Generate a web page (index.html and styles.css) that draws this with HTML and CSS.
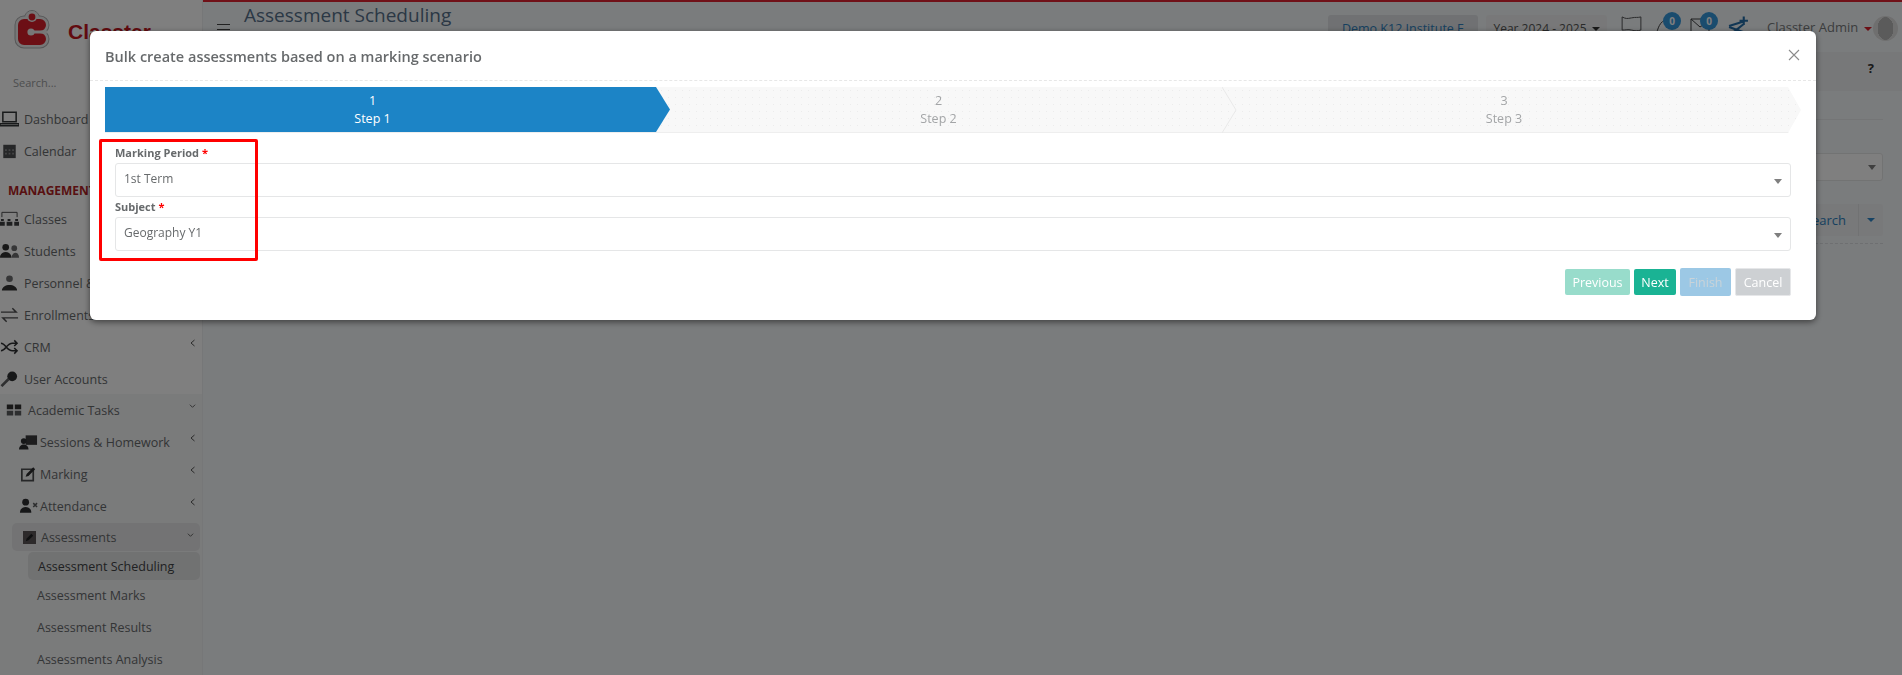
FILE: index.html
```html
<!DOCTYPE html>
<html lang="en">
<head>
<meta charset="utf-8">
<title>Assessment Scheduling</title>
<link rel="stylesheet" href="styles.css">
</head>
<body>
<div class="page">
  <aside class="sidebar">
    <div class="brand">
      <svg class="logo" viewBox="0 0 36 40"><g fill="none" stroke-linecap="round" stroke-linejoin="round"><circle cx="18" cy="8" r="7.5" fill="#eeeeee" stroke="#b0b1b3"/><path d="M26 15H10V29H26" stroke="#b0b1b3" stroke-width="19"/><path d="M26 15H10V29H26" stroke="#eeeeee" stroke-width="17"/><circle cx="18" cy="8" r="7" fill="#eeeeee"/><path d="M26 15H10V29H26" stroke="#d81f2a" stroke-width="12"/></g><circle cx="18" cy="7" r="5" fill="#eeeeee"/><circle cx="18" cy="7" r="3.4" fill="#d81f2a"/><path d="M19 20.5h14v3H19z" fill="#eeeeee"/><circle cx="17" cy="22" r="3.6" fill="#eeeeee"/></svg>
      <span class="brand-name">Classter</span>
    </div>
    <div class="search">Search...</div>
    <nav class="nav">
      <a class="item"><svg class="ic" viewBox="0 0 20 16"><path d="M3 1h14v10H3zM0 13h20v2H0z" fill="none" stroke="#333638" stroke-width="1.6"/></svg>Dashboard</a>
      <a class="item"><svg class="ic" viewBox="0 0 20 18"><path d="M3 2h14v15H3z" fill="#4d4e50"/><path d="M5 7h2v2H5zm4 0h2v2H9zm4 0h2v2h-2zm-8 4h2v2H5zm4 0h2v2H9zm4 0h2v2h-2z" fill="#8a8b8d"/></svg>Calendar</a>
      <div class="heading">MANAGEMENT</div>
      <a class="item"><svg class="ic" viewBox="0 0 20 16"><path d="M2 6V1h16v5" fill="none" stroke="#454648"/><path d="M0 11h5v4H0zm7 0h6v4H7zm8 0h5v4h-5zM1 8h3v2H1zm7 0h3v2H8zm8 0h3v2h-3z" fill="#3d3e40"/></svg>Classes</a>
      <a class="item"><svg class="ic" viewBox="0 0 20 16"><circle cx="6" cy="4" r="3.5" fill="#333"/><path d="M0 15c0-8 12-8 12 0z" fill="#333"/><circle cx="15" cy="5" r="3" fill="#6c6d6f"/><path d="M12 15c1-7 8-7 8 0z" fill="#6c6d6f"/></svg>Students</a>
      <a class="item"><svg class="ic" viewBox="0 0 20 16"><circle cx="10" cy="3.5" r="3.5" fill="#6c6d6f"/><path d="M2 16c0-8 16-8 16 0z" fill="#333"/></svg>Personnel &amp; HR</a>
      <a class="item"><svg class="ic" viewBox="0 0 20 16"><path d="M1 5h16M13 1l4 4-4 0M19 11H3M7 15l-4-4 4 0" fill="none" stroke="#4c4d4f" stroke-width="1.5"/></svg>Enrollments</a>
      <a class="item more"><svg class="ic" viewBox="0 0 20 16"><path d="M1 12c5 0 6-8 12-8h4M1 4c5 0 6 8 12 8h4M15 1l3 3-3 3M15 9l3 3-3 3" fill="none" stroke="#2f3032" stroke-width="1.6"/></svg>CRM<svg class="chev" viewBox="0 0 6 8"><path d="M5 1 1.5 4 5 7" fill="none" stroke="#555" stroke-width="1"/></svg></a>
      <a class="item"><svg class="ic" viewBox="0 0 20 18"><circle cx="13" cy="6" r="5.5" fill="#2f3032"/><path d="M9 9 1 17" stroke="#5e5f61" stroke-width="3"/></svg>User Accounts</a>
      <div class="group">
        <a class="item lvl1 more"><svg class="ic" viewBox="0 0 20 16"><path d="M1 1h8v6H1zm10 0h8v6h-8z" fill="#333"/><path d="M1 9h8v6H1zm10 0h8v6h-8z" fill="#5b5c5e"/></svg>Academic Tasks<svg class="chev" viewBox="0 0 8 6"><path d="M1 1.5 4 4.5 7 1.5" fill="none" stroke="#555"/></svg></a>
        <a class="item lvl2 more"><svg class="ic2" viewBox="0 0 20 16"><path d="M7 1h12v10H7z" fill="#3a3b3d"/><circle cx="5" cy="7" r="3" fill="#2d2e30"/><path d="M0 16c0-7 10-7 10 0z" fill="#2d2e30"/></svg>Sessions &amp; Homework<svg class="chev" viewBox="0 0 6 8"><path d="M5 1 1.5 4 5 7" fill="none" stroke="#555"/></svg></a>
        <a class="item lvl2 more"><svg class="ic2" viewBox="0 0 20 16"><path d="M3 3h12v12H3z" fill="none" stroke="#4d4e50" stroke-width="1.8"/><path d="M7 11l1-3 7-7 2 2-7 7z" fill="#2a2b2d"/></svg>Marking<svg class="chev" viewBox="0 0 6 8"><path d="M5 1 1.5 4 5 7" fill="none" stroke="#555"/></svg></a>
        <a class="item lvl2 more"><svg class="ic2" viewBox="0 0 20 16"><circle cx="7" cy="4" r="3.6" fill="#2d2e30"/><path d="M1 15c0-8 12-8 12 0z" fill="#2d2e30"/><path d="M15 5l4 4m0-4-4 4" stroke="#5b5c5e" stroke-width="1.6"/></svg>Attendance<svg class="chev" viewBox="0 0 6 8"><path d="M5 1 1.5 4 5 7" fill="none" stroke="#555"/></svg></a>
        <a class="item lvl2b more"><svg class="ic3" viewBox="0 0 14 14"><path d="M0 0h14v14H0z" fill="#5a5557"/><path d="M3 11l1-3 5-5 2 2-5 5z" fill="#1f2022"/></svg>Assessments<svg class="chev" viewBox="0 0 8 6"><path d="M1 1.5 4 4.5 7 1.5" fill="none" stroke="#555"/></svg></a>
        <a class="sub active">Assessment Scheduling</a>
        <a class="sub">Assessment Marks</a>
        <a class="sub">Assessment Results</a>
        <a class="sub">Assessments Analysis</a>
      </div>
    </nav>
  </aside>
  <main class="main">
    <header class="topbar">
      <span class="burger"></span>
      <h1 class="page-title">Assessment Scheduling</h1>
      <div class="tools">
        <span class="chip chip-link">Demo K12 Institute E</span>
        <span class="chip chip-year">Year 2024 - 2025 <i class="caret dark"></i></span>
        <span class="tool-icons">
          <svg class="flag" viewBox="0 0 22 16"><path d="M1 1c4 2 5 2 10 1s6 0 10-1v14c-4 1-6 1-10 0s-6 0-10 0z" fill="none" stroke="#4b4c4e"/></svg>
          <span class="alert"><svg class="bell" viewBox="0 0 20 20"><path d="M1 19c2-6 3-14 12-16" fill="none" stroke="#3f4042"/></svg><b class="badge">0</b></span>
          <span class="alert"><svg class="bell" viewBox="0 0 20 20"><path d="M1 3h18v15H1zM1 3l9 8 9-6" fill="none" stroke="#3f4042"/></svg><b class="badge">0</b></span>
          <svg class="net" viewBox="0 0 20 16"><path d="M1 9l13-4M1 10l14 5M5 15l10-8M15 0v8M11 4h8" fill="none" stroke="#236da8" stroke-width="2"/></svg>
        </span>
        <span class="user">Classter Admin <i class="caret red"></i></span>
        <span class="avatar"></span>
      </div>
    </header>
    <div class="band"><span class="help">?</span></div>
    <section class="panel">
      <div class="panel-select"><i class="caret grey"></i></div>
      <div class="panel-actions">
        <span class="search-btn">Search</span><span class="search-drop"><i class="caret blue"></i></span>
      </div>
    </section>
  </main>
</div>

<div class="backdrop">
  <div class="modal">
    <div class="modal-head">
      <h2 class="modal-title">Bulk create assessments based on a marking scenario</h2>
      <svg class="close" viewBox="0 0 12 12"><path d="M1 1l10 10M11 1 1 11" stroke="#8b8b8b" stroke-width="1.1" fill="none"/></svg>
    </div>
    <div class="steps">
      <div class="step current"><span>1</span><span>Step 1</span></div>
      <div class="step"><span>2</span><span>Step 2</span><svg class="sep" viewBox="0 0 15 46" preserveAspectRatio="none"><path d="M0 0 14 23 0 46" fill="none" stroke="#e9e9e9"/></svg></div>
      <div class="step last"><span>3</span><span>Step 3</span></div>
    </div>
    <form class="form">
      <div class="field">
        <label class="label">Marking Period <em>*</em></label>
        <div class="select">1st Term<i class="caret grey"></i></div>
      </div>
      <div class="field">
        <label class="label">Subject <em>*</em></label>
        <div class="select">Geography Y1<i class="caret grey"></i></div>
      </div>
      <div class="actions">
        <span class="btn prev">Previous</span>
        <span class="btn next">Next</span>
        <span class="btn finish">Finish</span>
        <span class="btn cancel">Cancel</span>
      </div>
    </form>
    <div class="highlight"></div>
  </div>
</div>
</body>
</html>
```

FILE: styles.css
```css
* { box-sizing: border-box; }
html, body { margin: 0; height: 100%; overflow: hidden; }
body { font-family: "Open Sans", "Noto Sans", sans-serif; font-size: 13px; color: #676a6c; background: #f5f8fa; }
.page { display: flex; height: 675px; }

.sidebar { width: 203px; flex: none; background: #fefefe; border-right: 1px solid #eceef0; display: flex; flex-direction: column; overflow: hidden; }
.brand { height: 64px; display: flex; align-items: flex-start; padding: 10px 0 0 14px; }
.logo { width: 36px; height: 40px; flex: none; }
.brand-name { font-family: "Liberation Sans", sans-serif; font-weight: 700; font-size: 21px; color: #c4161f; margin: 10px 0 0 18px; }
.search { height: 43px; padding: 14px 0 0 13px; font-size: 11px; color: #9b9d9f; }
.nav { display: flex; flex-direction: column; }
.item { height: 32px; display: flex; align-items: center; color: #676a6c; font-size: 12.5px; position: relative; white-space: nowrap; flex: none; }
.ic { width: 19px; height: 16px; margin-right: 5px; flex: none; }
.ic2 { width: 19px; height: 16px; margin-right: 2px; flex: none; }
.ic3 { width: 13px; height: 13px; margin-right: 5px; flex: none; }
.heading { height: 37px; padding: 16px 0 0 8px; color: #b11e25; font-weight: 700; font-size: 12px; line-height: 16px; white-space: nowrap; margin-bottom: -1px; }
.chev { position: absolute; right: 6px; top: 8px; width: 7px; height: 8px; }
.group { background: #f5f6f7; display: flex; flex-direction: column; margin-top: -1px; }
.lvl1 { padding-left: 6px; }
.lvl1 .ic { margin-right: 6px; width: 16px; }
.lvl2 { padding-left: 19px; }
.lvl2b { height: 28px; margin: 1px 2px 1px 12px; padding-left: 11px; border-radius: 5px; background: #e6e7e8; }
.sub { height: 32px; padding-left: 37px; margin-right: 2px; display: flex; align-items: center; font-size: 12.5px; color: #676a6c; white-space: nowrap; flex: none; }
.sub.active { height: 28px; margin: 0 2px -1px 28px; padding-left: 10px; border-radius: 5px; background: #e3e4e5; color: #404244; }

.main { flex: 1; min-width: 0; display: flex; flex-direction: column; border-top: 2px solid #e02231; }
.topbar { height: 50px; display: flex; align-items: flex-start; position: relative; flex: none; }
.burger { width: 13px; height: 6px; margin: 22px 0 0 14px; border-top: 1px solid #444; border-bottom: 1px solid #444; flex: none; }
.page-title { margin: 0 0 0 14px; font-size: 19px; font-weight: 400; line-height: 26px; color: #56708b; white-space: nowrap; }
.tools { margin-left: auto; display: flex; align-items: flex-start; font-size: 13px; padding-top: 13px; }
.chip { height: 27px; display: flex; align-items: center; justify-content: center; border-radius: 3px; white-space: nowrap; font-size: 12.5px; }
.chip-link { width: 150px; background: #e0e3e6; color: #2e81bf; }
.chip-year { width: 121px; margin-left: 8px; background: #f0f1f2; color: #555; gap: 5px; font-size: 12px; }
.tool-icons { width: 160px; height: 32px; padding: 1px 0 0 14px; display: flex; align-items: flex-start; }
.flag { width: 21px; height: 15px; flex: none; margin-right: 13px; }
.alert { position: relative; width: 35px; flex: none; }
.bell { width: 20px; height: 20px; }
.badge { position: absolute; left: 8px; top: -4px; width: 18px; height: 18px; border-radius: 50%; background: #3598dc; color: #fff; font-size: 10px; line-height: 18px; text-align: center; }
.alert + .alert .badge { left: 10px; }
.net { width: 21px; height: 18px; flex: none; margin-left: 3px; }
.user { width: 106px; color: #777a7c; font-size: 13px; padding-top: 3px; white-space: nowrap; }
.avatar { width: 25px; height: 25px; border-radius: 50%; margin: 1px 4px 0 0; background: radial-gradient(ellipse 32% 46% at 50% 50%, #b7b7b7 98%, #dedede 100%); }
.caret { display: inline-block; width: 0; height: 0; border-left: 4px solid transparent; border-right: 4px solid transparent; border-top: 4px solid #333; vertical-align: middle; }
.caret.red { border-top-color: #d81f2a; margin-left: 2px; }
.caret.grey { border-top-color: #7f7f7f; border-top-width: 5px; position: absolute; right: 8px; top: 15px; }
.caret.blue { border-top-color: #2f86c9; }
.band { height: 39px; flex: none; background: #eef0f2; position: relative; }
.help { position: absolute; right: 28px; top: 6px; font-weight: 700; font-size: 13px; color: #333; line-height: 20px; }
.panel { margin: 28px 19px 0 20px; height: 125px; border-top: 1px solid #e8eaec; border-bottom: 1px dashed #dcdfe2; position: relative; display: flex; flex-direction: column; align-items: flex-end; padding-top: 33px; }
.panel-select { height: 28px; width: 100%; background: #fff; border: 1px solid #e5e6e7; border-radius: 3px; position: relative; }
.panel-select .caret.grey { top: 11px; right: 6px; }
.panel-actions { display: flex; margin-top: 23px; height: 32px; }
.search-btn { width: 80px; display: flex; align-items: center; justify-content: flex-end; padding-right: 12px; background: #f0f2f4; border-radius: 3px 0 0 3px; color: #2e81bf; font-size: 13px; }
.search-drop { width: 25px; display: flex; align-items: center; justify-content: center; background: #f0f2f4; border-left: 1px solid #e3e5e7; border-radius: 0 3px 3px 0; }

.backdrop { position: fixed; inset: 0; background: rgba(0, 0, 0, .5); padding: 31px 86px 0 90px; }
.modal { position: relative; height: 289px; background: #fff; border-radius: 6px; box-shadow: 0 2px 6px rgba(0, 0, 0, .5); }
.modal-head { height: 50px; border-bottom: 1px dashed #e7e7e7; display: flex; align-items: center; justify-content: space-between; padding: 0 15px; }
.modal-title { margin: 0; font-size: 14.5px; font-weight: 600; color: #676a6c; padding-top: 2px; }
.close { width: 12px; height: 12px; margin: -2px 1px 0 0; }
.steps { display: grid; grid-template-columns: 565px 567px 564px; height: 46px; margin: 6px 15px 0; background-color: #f8f8f8; background-image: radial-gradient(circle, #ececec 0.6px, transparent 0.8px); background-size: 7px 7px; border-bottom: 1px solid #eeeeee; clip-path: polygon(0 0, calc(100% - 13px) 0, 100% 50%, calc(100% - 13px) 100%, 0 100%); }
.step { position: relative; display: flex; flex-direction: column; align-items: center; padding: 5px 30px 0 0; font-size: 12.5px; line-height: 18px; color: #a3a5a7; }
.step.current { background: #1c84c6; color: #fff; clip-path: polygon(0 0, calc(100% - 14px) 0, 100% 50%, calc(100% - 14px) 100%, 0 100%); }
.sep { position: absolute; right: 0; top: 0; width: 15px; height: 46px; }
.form { padding: 11px 25px 0; }
.field { height: 54px; }
.label { display: block; font-size: 11px; font-weight: 700; line-height: 18px; height: 19px; color: #676a6c; }
.label em { color: #f00; font-style: normal; font-weight: 700; }
.select { position: relative; height: 34px; border: 1px solid #e5e6e7; border-radius: 3px; padding: 0 8px; line-height: 30px; font-size: 12px; color: #676a6c; }
.actions { display: flex; justify-content: flex-end; align-items: center; gap: 4px; margin-top: 16px; }
.btn { height: 26px; display: flex; align-items: center; justify-content: center; border-radius: 2px; color: #fff; font-size: 12.5px; }
.prev { width: 65px; background: #98dccb; }
.next { width: 42px; background: #1ab394; }
.finish { width: 51px; height: 28px; background: #9cc8e5; color: #c9d3d9; }
.cancel { width: 56px; height: 28px; background: #cdd0d3; border: 1px solid #e6e7e9; }
.highlight { position: absolute; left: 9px; top: 108px; width: 159px; height: 122px; border: 3px solid #f00; border-radius: 2px; }
```
